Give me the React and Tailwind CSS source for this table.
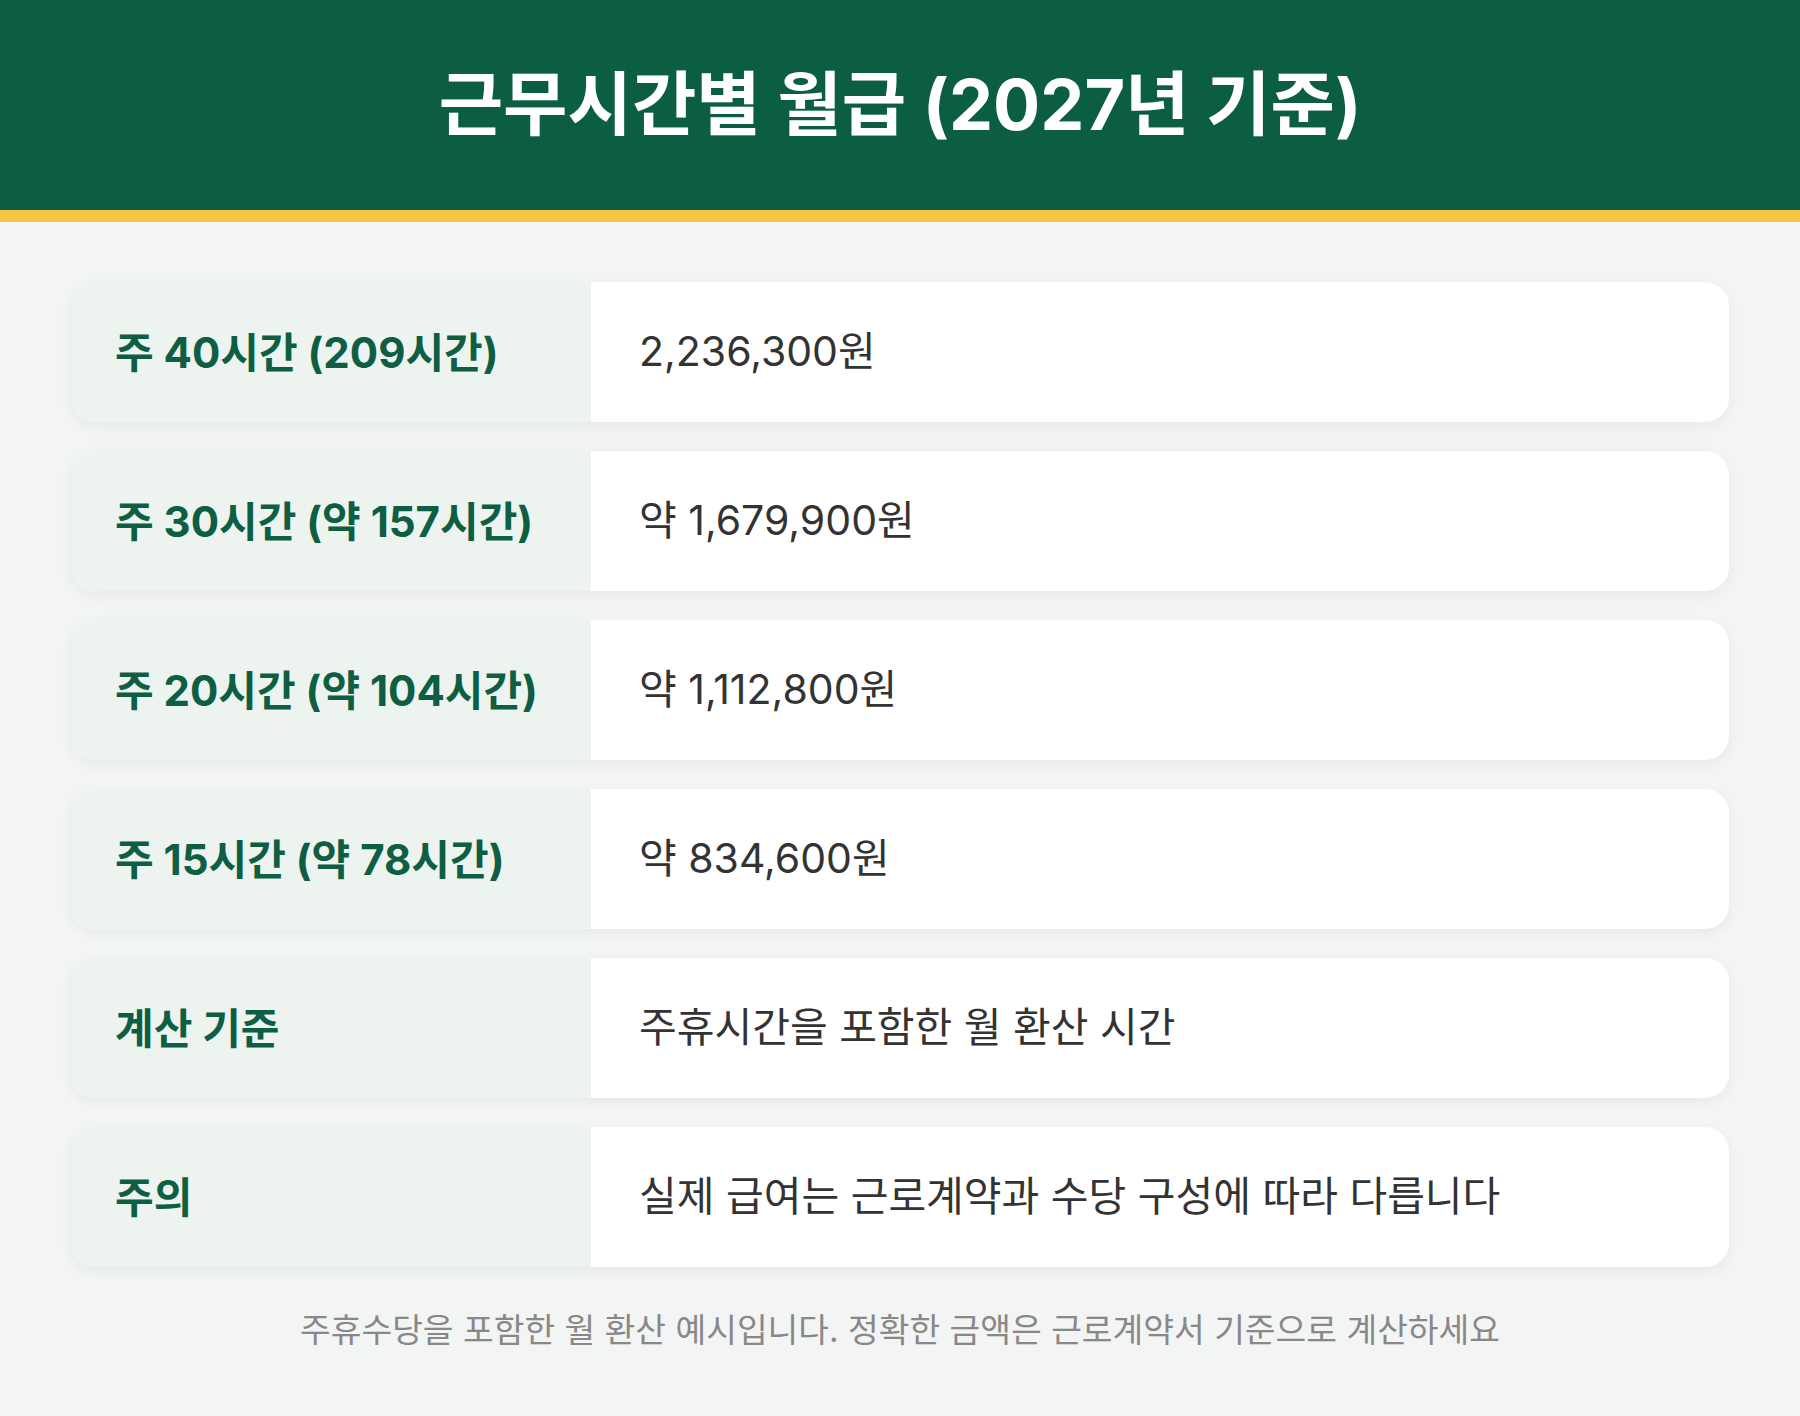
import React from 'react';

const rows = [
  { label: '주 40시간 (209시간)', value: '2,236,300원' },
  { label: '주 30시간 (약 157시간)', value: '약 1,679,900원' },
  { label: '주 20시간 (약 104시간)', value: '약 1,112,800원' },
  { label: '주 15시간 (약 78시간)', value: '약 834,600원' },
  { label: '계산 기준', value: '주휴시간을 포함한 월 환산 시간' },
  { label: '주의', value: '실제 급여는 근로계약과 수당 구성에 따라 다릅니다' },
];

const Row = ({ label, value }) => (
  <div className="flex h-[140px] rounded-3xl overflow-hidden bg-white shadow-[0_4px_14px_rgba(0,0,0,0.05)]">
    <div className="w-[520px] shrink-0 bg-[#edf3ef] flex items-center pl-[44px] text-[42px] font-bold text-[#0d5e42]">
      {label}
    </div>
    <div className="flex-1 flex items-center pl-[48px] text-[41px] text-[#333333]">
      {value}
    </div>
  </div>
);

export default function App() {
  return (
    <div
      className="min-h-screen bg-[#f3f5f4]"
      style={{ fontFamily: 'Inter, "Noto Sans CJK KR", sans-serif' }}
    >
      {/* header */}
      <div className="h-[222px] bg-[#0c5e42] border-b-[12px] border-[#f4c443] flex items-center justify-center">
        <h1 className="text-[70px] font-bold text-white leading-none">근무시간별 월급 (2027년 기준)</h1>
      </div>

      <div className="px-[71px] pt-[60px] flex flex-col gap-[29px]">
        {rows.map((r) => (
          <Row key={r.label} label={r.label} value={r.value} />
        ))}
      </div>

      <p className="mt-[39px] text-center text-[33.4px] leading-[48px] text-[#888888]">
        주휴수당을 포함한 월 환산 예시입니다. 정확한 금액은 근로계약서 기준으로 계산하세요
      </p>
    </div>
  );
}
